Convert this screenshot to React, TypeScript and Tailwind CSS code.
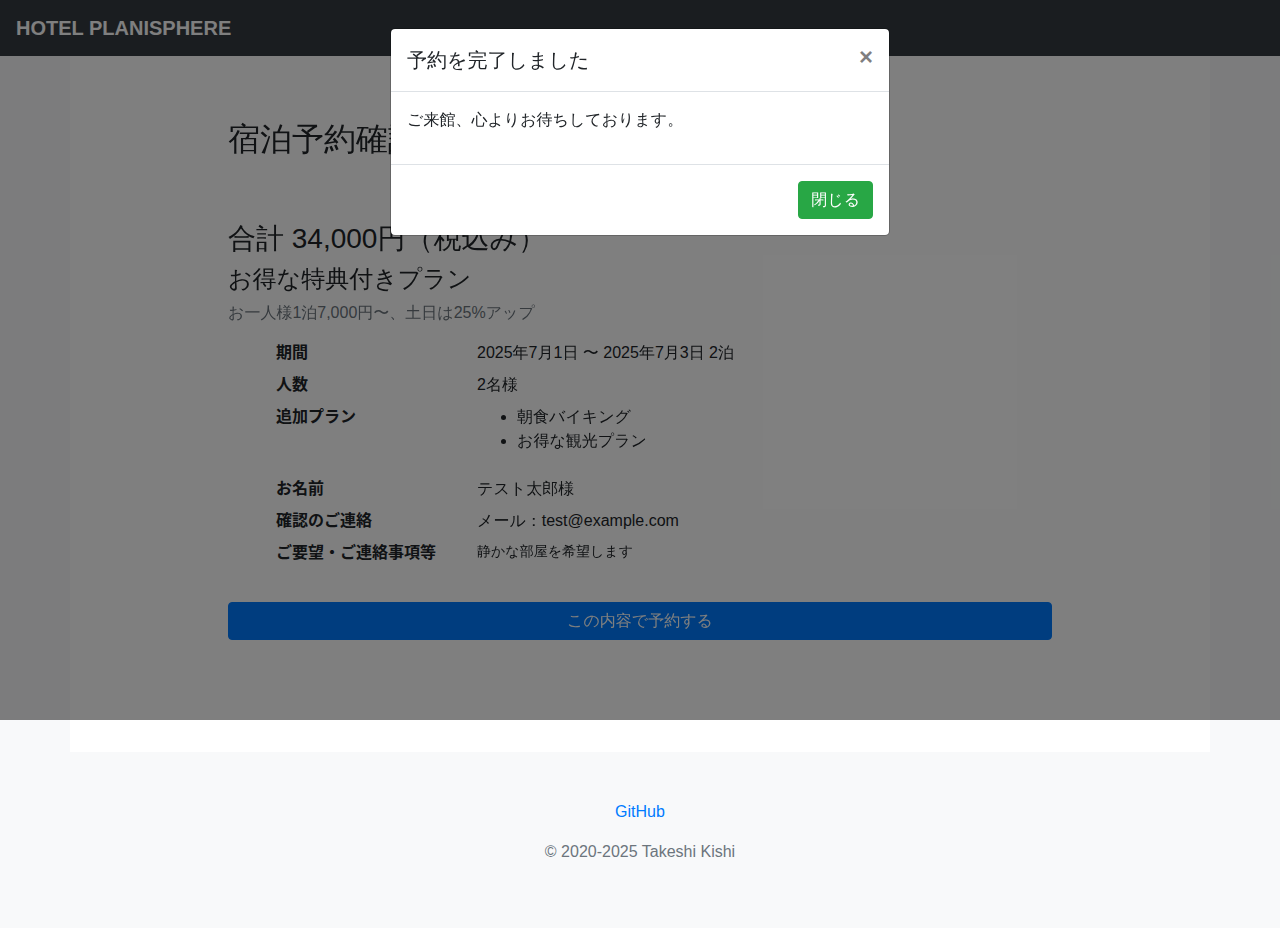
import React from "react";

const details: { label: string; value: React.ReactNode }[] = [
  { label: "期間", value: "2025年7月1日 〜 2025年7月3日 2泊" },
  { label: "人数", value: "2名様" },
  {
    label: "追加プラン",
    value: (
      <ul className="mb-4 list-disc pl-10">
        <li>朝食バイキング</li>
        <li>お得な観光プラン</li>
      </ul>
    ),
  },
  { label: "お名前", value: "テスト太郎様" },
  { label: "確認のご連絡", value: "メール：test@example.com" },
  {
    label: "ご要望・ご連絡事項等",
    value: <p className="mb-4 text-sm leading-[21px]">静かな部屋を希望します</p>,
  },
];

function Navbar() {
  return (
    <header className="flex h-14 items-center bg-[#343a40] px-4">
      <a href="#" className="text-xl leading-[30px] font-bold text-white">
        HOTEL PLANISPHERE
      </a>
    </header>
  );
}

function Confirmation() {
  return (
    <main className="mx-auto max-w-[1140px] bg-white px-4 pt-16 pb-28">
      <div className="mx-auto max-w-[824px]">
        <h2 className="mb-16 text-[32px] leading-[38px]">宿泊予約確認</h2>
        <h3 className="mb-2 text-[28px] leading-[34px]">合計 34,000円（税込み）</h3>
        <h4 className="mb-2 text-2xl leading-[29px]">お得な特典付きプラン</h4>
        <p className="mb-4 text-[#6c757d]">お一人様1泊7,000円〜、土日は25%アップ</p>
        <dl className="mx-12 mb-6 grid grid-cols-[201px_1fr] gap-y-2">
          {details.map((d) => (
            <React.Fragment key={d.label}>
              <dt className="font-['Liberation_Sans','Noto_Sans_CJK_JP',sans-serif] font-bold">{d.label}</dt>
              <dd>{d.value}</dd>
            </React.Fragment>
          ))}
        </dl>
        <button
          type="button"
          className="block w-full rounded border border-[#007bff] bg-[#007bff] px-3 py-1.5 text-center text-white"
        >
          この内容で予約する
        </button>
      </div>
    </main>
  );
}

function CompletionDialog() {
  return (
    <div className="absolute inset-x-0 top-0 h-[720px] bg-black/50">
      <div
        role="dialog"
        aria-modal="true"
        aria-labelledby="dialog-title"
        className="mx-auto mt-7 max-w-[500px] rounded-[5px] border border-black/20 bg-white bg-clip-padding"
      >
        <div className="flex items-start justify-between border-b border-[#dee2e6] p-4">
          <h5 id="dialog-title" className="text-xl leading-[30px]">
            予約を完了しました
          </h5>
          <button type="button" aria-label="閉じる" className="text-2xl leading-6 font-bold text-black/50">
            ×
          </button>
        </div>
        <div className="p-4">
          <p className="mb-4">ご来館、心よりお待ちしております。</p>
        </div>
        <div className="flex justify-end border-t border-[#dee2e6] p-4">
          <button
            type="button"
            className="rounded border border-[#28a745] bg-[#28a745] px-3 py-1.5 text-white"
          >
            閉じる
          </button>
        </div>
      </div>
    </div>
  );
}

export default function App() {
  return (
    <div
      lang="ja"
      className="relative flow-root min-h-screen bg-[#f8f9fa] font-['Liberation_Sans','WenQuanYi_Zen_Hei','Noto_Sans_CJK_JP',sans-serif] text-base text-[#212529]"
    >
      <Navbar />
      <Confirmation />
      <footer className="py-12 text-center text-[#6c757d]">
        <p className="mb-4">
          <a href="#" className="text-[#007bff]">
            GitHub
          </a>
        </p>
        <p>© 2020-2025 Takeshi Kishi</p>
      </footer>
      <CompletionDialog />
    </div>
  );
}
